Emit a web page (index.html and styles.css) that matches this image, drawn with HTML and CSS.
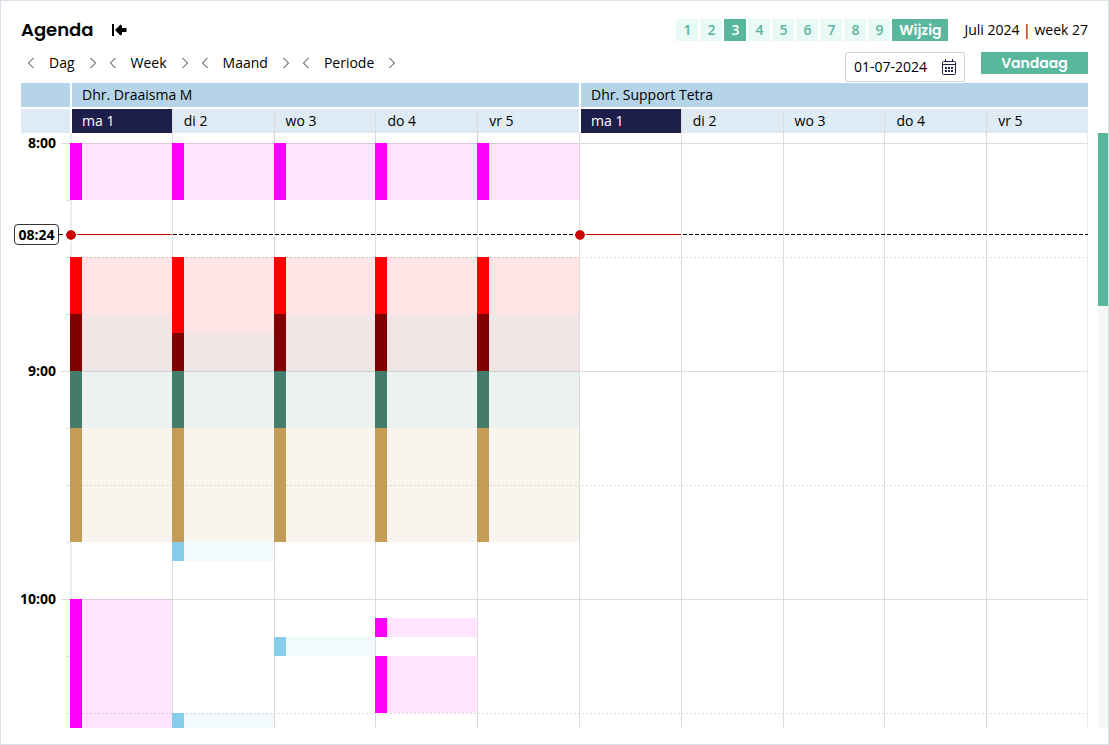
FILE: index.html
```html
<!DOCTYPE html>
<html lang="nl">
<head>
<meta charset="utf-8">
<title>Agenda</title>
<link rel="stylesheet" href="styles.css">
<script src="agenda.js" defer></script>
</head>
<body>
<main class="agenda">
  <header class="topbar">
    <h1 class="title">Agenda</h1>
    <button class="collapse" type="button" aria-label="Inklappen">
      <svg width="15" height="12" viewBox="0 0 15 12"><path d="M0 0h2v12H0zM3 6l5.500-5.500 1.500 1.300V4h4.500v4H10v2.200l-1.500 1.300z"/></svg>
    </button>
    <div class="views">
      <button class="view" type="button">1</button>
      <button class="view" type="button">2</button>
      <button class="view view-active" type="button">3</button>
      <button class="view" type="button">4</button>
      <button class="view" type="button">5</button>
      <button class="view" type="button">6</button>
      <button class="view" type="button">7</button>
      <button class="view" type="button">8</button>
      <button class="view" type="button">9</button>
      <button class="action edit" type="button">Wijzig</button>
    </div>
    <span class="period">Juli 2024 | week 27</span>
  </header>

  <div class="toolbar">
    <nav class="steps">
      <div class="step">
        <button class="arrow" type="button" aria-label="Vorige dag"><svg width="6" height="12" viewBox="0 0 6 12"><path d="M5.500 1L.5 6l5 5"/></svg></button>
        <span>Dag</span>
        <button class="arrow" type="button" aria-label="Volgende dag"><svg width="6" height="12" viewBox="0 0 6 12"><path d="M.5 1l5 5-5 5"/></svg></button>
      </div>
      <div class="step">
        <button class="arrow" type="button" aria-label="Vorige week"><svg width="6" height="12" viewBox="0 0 6 12"><path d="M5.500 1L.5 6l5 5"/></svg></button>
        <span>Week</span>
        <button class="arrow" type="button" aria-label="Volgende week"><svg width="6" height="12" viewBox="0 0 6 12"><path d="M.5 1l5 5-5 5"/></svg></button>
      </div>
      <div class="step">
        <button class="arrow" type="button" aria-label="Vorige maand"><svg width="6" height="12" viewBox="0 0 6 12"><path d="M5.500 1L.5 6l5 5"/></svg></button>
        <span>Maand</span>
        <button class="arrow" type="button" aria-label="Volgende maand"><svg width="6" height="12" viewBox="0 0 6 12"><path d="M.5 1l5 5-5 5"/></svg></button>
      </div>
      <div class="step">
        <button class="arrow" type="button" aria-label="Vorige periode"><svg width="6" height="12" viewBox="0 0 6 12"><path d="M5.500 1L.5 6l5 5"/></svg></button>
        <span>Periode</span>
        <button class="arrow" type="button" aria-label="Volgende periode"><svg width="6" height="12" viewBox="0 0 6 12"><path d="M.5 1l5 5-5 5"/></svg></button>
      </div>
    </nav>
    <label class="date">
      <input class="date-input" type="text" value="01-07-2024" aria-label="Datum">
      <svg class="date-icon" width="14" height="16" viewBox="0 0 14 16"><path d="M1.500 2.500h11a1 1 0 0 1 1 1v11a1 1 0 0 1-1 1h-11a1 1 0 0 1-1-1v-11a1 1 0 0 1 1-1zM.5 5.500h13M3.500 0v3M10.500 0v3" fill="none" stroke="#1e1e4b"/><path d="M3 8h2v2H3zM6 8h2v2H6zM9 8h2v2H9zM3 11h2v2H3zM6 11h2v2H6zM9 11h2v2H9z" fill="#1e1e4b"/></svg>
    </label>
    <button class="action today" type="button">Vandaag</button>
  </div>

  <div class="heads">
    <div class="corner corner-top"></div>
    <div class="person">Dhr. Draaisma M</div>
    <div class="person">Dhr. Support Tetra</div>
    <div class="corner"></div>
    <div class="day-heads">
      <div class="day-head day-today">ma 1</div>
      <div class="day-head">di 2</div>
      <div class="day-head">wo 3</div>
      <div class="day-head">do 4</div>
      <div class="day-head">vr 5</div>
      <div class="day-head day-today">ma 1</div>
      <div class="day-head">di 2</div>
      <div class="day-head">wo 3</div>
      <div class="day-head">do 4</div>
      <div class="day-head">vr 5</div>
    </div>
  </div>

  <section class="planner">
    <div class="times">
      <div class="hour">8:00</div><i></i><i></i><i></i>
      <div class="hour">9:00</div><i></i><i></i><i></i>
      <div class="hour">10:00</div><i></i><i></i><i></i>
    </div>
    <div class="board">
      <div class="lines"><i></i><i></i><i></i><i></i><i></i><i></i></div>
      <div class="days" id="days"></div>
    </div>
    <div class="now">
      <time class="now-time">08:24</time>
      <div class="now-line">
        <div class="now-person"></div>
        <div class="now-person"></div>
      </div>
    </div>
    <div class="scroll"><div class="scroll-thumb"></div></div>
  </section>
</main>
</body>
</html>
```

FILE: styles.css
```css
* { box-sizing: border-box; }

body {
  margin: 0;
  background: #fff;
  color: #000;
  font: 14px/20px "Open Sans", "Noto Sans", sans-serif;
}

button, input { font: inherit; color: inherit; border: 0; padding: 0; margin: 0; background: none; }
button { cursor: pointer; }
svg { display: block; }

.agenda {
  display: flex;
  flex-direction: column;
  height: 100vh;
  padding: 18px 0 16px;
  border: 1px solid #dbdfe9;
}

.topbar { display: flex; align-items: center; height: 22px; padding: 0 20px; }
.title { margin: 0; font: 600 18px/22px Poppins, Inter, sans-serif; }
.collapse { margin-left: 18px; }
.views { display: flex; gap: 2px; margin-left: auto; }
.view {
  width: 22px;
  height: 22px;
  background: #e9f9f5;
  color: #58b79d;
  font-weight: 600;
}
.view-active { background: #58b79d; color: #fff; }
.action {
  height: 22px;
  background: #58b79d;
  color: #fff;
  font: 600 14px/22px Poppins, Inter, sans-serif;
}
.edit { width: 56px; }
.period { margin-left: 16px; }

.toolbar { display: flex; align-items: flex-start; padding: 11px 20px 1px; }
.steps { display: flex; gap: 14px; margin-left: 7px; }
.step { display: flex; align-items: center; gap: 15px; height: 22px; }
.arrow path { fill: none; stroke: #333; }
.date {
  display: flex;
  align-items: center;
  width: 120px;
  height: 30px;
  margin-left: auto;
  padding: 0 8px;
  border: 1px solid #cfd3e0;
  border-radius: 2px;
}
.date-input { flex: 1; min-width: 0; outline: 0; }
.today { width: 107px; margin-left: 16px; }

.heads {
  display: grid;
  grid-template-columns: 49px 1fr 1fr;
  grid-auto-rows: 24px;
  row-gap: 2px;
  margin: 0 20px;
  line-height: 24px;
}
.corner, .day-head { background: #deebf5; }
.corner-top, .person { background: #b5d4e8; }
.person { border-left: 2px solid #fff; padding-left: 10px; }
.day-heads { grid-column: span 2; display: grid; grid-template-columns: repeat(10, 1fr); }
.day-head { border-left: 1px solid #dcdcdc; padding-left: 11px; }
.day-today {
  border-left: 2px solid #fff;
  padding-left: 10px;
  background: #1e1e4b;
  color: #fff;
}

.planner {
  position: relative;
  display: flex;
  flex: 1;
  min-height: 0;
  padding-left: 13px;
  overflow: hidden;
}

.times { display: grid; grid-auto-rows: 57px; flex: 0 0 56px; padding-top: 10px; height: 0; }
.times > * {
  background: linear-gradient(#dcdcdc, #dcdcdc) right top / 4px 1px no-repeat;
}
.times .hour {
  margin-top: -10px;
  height: 20px;
  padding-right: 14px;
  background-size: 9px 1px;
  background-position: right 10px;
  font-weight: 700;
  text-align: right;
  white-space: nowrap;
}

.board { display: grid; flex: 1; min-height: 0; margin-right: 10px; }
.lines, .days { grid-area: 1 / 1; height: 0; min-height: 100%; }
.lines {
  display: grid;
  grid-auto-rows: 114px;
  padding-top: 10px;
  border-right: 1px solid #ececec;
  overflow: hidden;
}
.lines i { background: linear-gradient(#dcdcdc, #dcdcdc) top / 100% 1px no-repeat; }
.lines i:nth-child(even) {
  background: repeating-linear-gradient(90deg, #dcdcdc 0 2px, transparent 2px 4px) top / 100% 1px no-repeat;
}

.days { display: grid; grid-template-columns: repeat(10, 1fr); overflow: hidden; }
.day {
  display: grid;
  grid-auto-rows: 19px;
  padding-top: 10px;
  background: linear-gradient(#dcdcdc, #dcdcdc) left / 1px 100% no-repeat;
}
.day:first-child { background: linear-gradient(#ececec, #ececec) left / 2px 100% no-repeat; }
.event {
  border-left: 12px solid var(--tone);
  background: color-mix(in srgb, var(--tone) 10%, transparent);
  background-clip: padding-box;
}
.magenta { --tone: #ff00ff; }
.red { --tone: #ff0000; }
.maroon { --tone: #800000; }
.green { --tone: #447c6c; }
.sand { --tone: #c39c58; }
.sky { --tone: #87ceeb; }

.now {
  position: absolute;
  top: 91px;
  left: 13px;
  right: 20px;
  display: flex;
  align-items: center;
  height: 21px;
}
.now-time {
  flex: 0 0 45px;
  height: 21px;
  border: 1px solid #333;
  border-radius: 4px;
  background: #fff;
  font-weight: 700;
  line-height: 19px;
  text-align: center;
}
.now-line {
  display: grid;
  grid-template-columns: 1fr 1fr;
  flex: 1;
  height: 1px;
  padding-left: 11px;
  background: repeating-linear-gradient(90deg, #000 0 4px, transparent 4px 6px);
}
.now-person {
  position: relative;
  background: linear-gradient(#cc0000, #cc0000) left / 20% 100% no-repeat;
}
.now-person::before {
  content: "";
  position: absolute;
  top: -5px;
  left: -5px;
  width: 10px;
  height: 10px;
  border: 1px solid #fff;
  border-radius: 50%;
  background: #cc0000;
  background-clip: padding-box;
}

.scroll { flex: 0 0 10px; background: #f7f7f7; }
.scroll-thumb { height: 29%; background: #58b79d; }
```

FILE: agenda.js
```js
// Each event: [tone, start slot, number of slots]; a slot is five minutes, counted from 8:00.
const morning = [
  ["magenta", 0, 3], ["red", 6, 3], ["maroon", 9, 3], ["green", 12, 3], ["sand", 15, 6],
];
const days = [
  [...morning, ["magenta", 24, 9]],
  [["magenta", 0, 3], ["red", 6, 4], ["maroon", 10, 2], ["green", 12, 3], ["sand", 15, 6],
    ["sky", 21, 1], ["sky", 30, 1]],
  [...morning, ["sky", 26, 1]],
  [...morning, ["magenta", 25, 1], ["magenta", 27, 3]],
  morning,
  [], [], [], [], [],
];

const board = document.getElementById("days");
for (const events of days) {
  const day = document.createElement("div");
  day.className = "day";
  for (const [tone, start, length] of events) {
    const event = document.createElement("div");
    event.className = `event ${tone}`;
    event.style.gridRow = `${start + 1} / span ${length}`;
    day.append(event);
  }
  board.append(day);
}
```
